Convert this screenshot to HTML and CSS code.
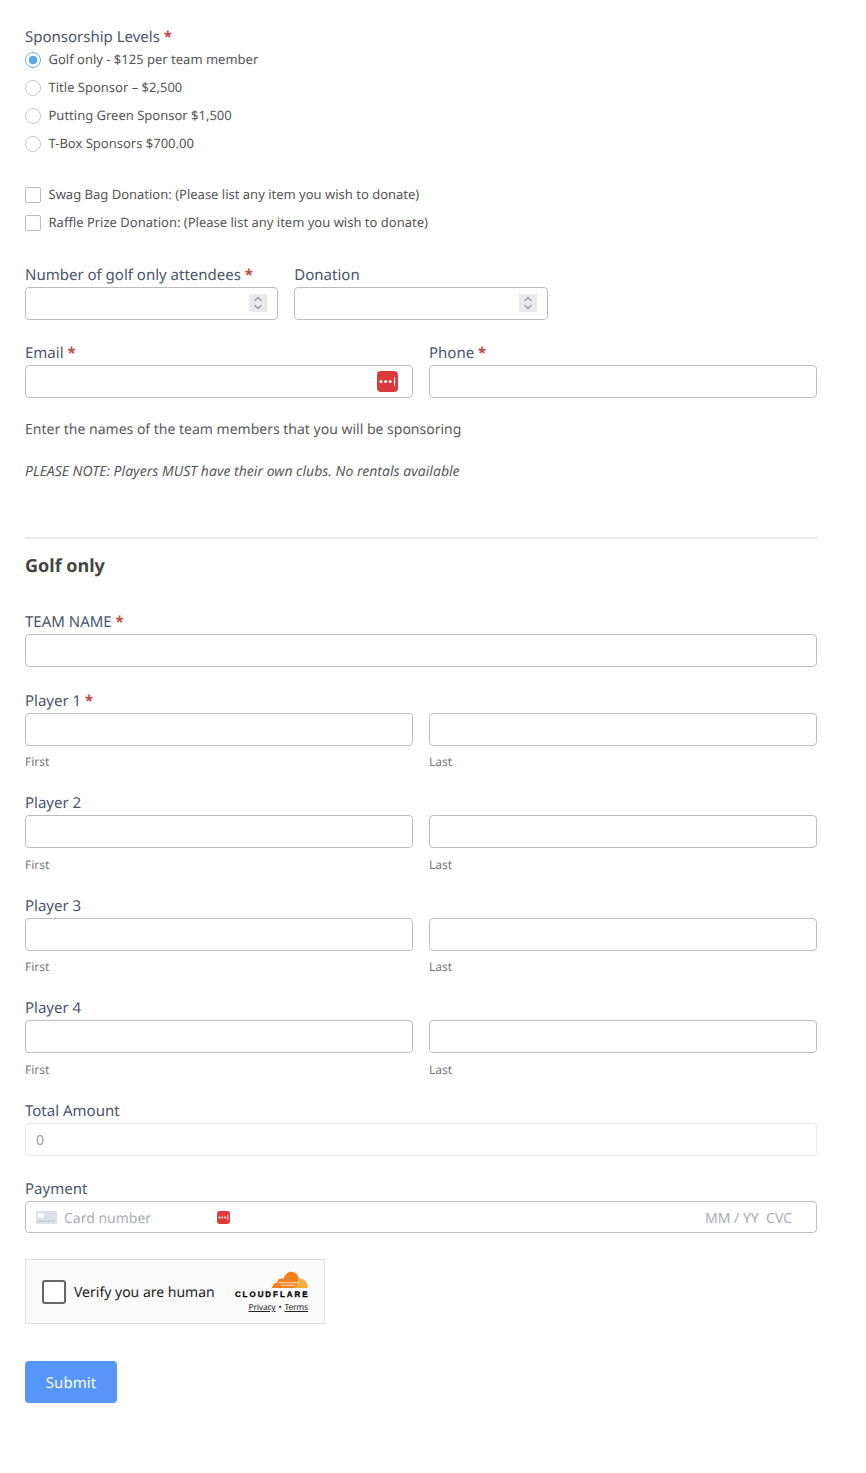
FILE: index.html
```html
<!DOCTYPE html>
<html lang="en">
<head>
<meta charset="utf-8">
<title>Sponsorship form</title>
<link rel="stylesheet" href="styles.css">
</head>
<body>
<form class="form">
  <div class="legend">Sponsorship Levels <span class="req">*</span></div>
  <div class="choices">
    <label class="choice"><span class="radio radio-on"></span>Golf only - $125 per team member</label>
    <label class="choice"><span class="radio"></span>Title Sponsor – $2,500</label>
    <label class="choice"><span class="radio"></span>Putting Green Sponsor $1,500</label>
    <label class="choice"><span class="radio"></span>T-Box Sponsors $700.00</label>
  </div>
  <div class="choices checks">
    <label class="choice"><span class="check"></span>Swag Bag Donation: (Please list any item you wish to donate)</label>
    <label class="choice"><span class="check"></span>Raffle Prize Donation: (Please list any item you wish to donate)</label>
  </div>

  <div class="row row-three">
    <div class="field">
      <div class="label">Number of golf only attendees <span class="req">*</span></div>
      <div class="box-wrap"><input class="box" type="text">
        <span class="stepper"><svg width="10" height="14" viewBox="0 0 10 14"><path d="M1.5 4.8 5 1.5l3.5 3.3M1.5 9.2 5 12.5l3.5-3.3" fill="none" stroke="#8e8e97" stroke-width="1.1"/></svg></span>
      </div>
    </div>
    <div class="field">
      <div class="label">Donation</div>
      <div class="box-wrap"><input class="box" type="text">
        <span class="stepper"><svg width="10" height="14" viewBox="0 0 10 14"><path d="M1.5 4.8 5 1.5l3.5 3.3M1.5 9.2 5 12.5l3.5-3.3" fill="none" stroke="#8e8e97" stroke-width="1.1"/></svg></span>
      </div>
    </div>
  </div>

  <div class="row row-two">
    <div class="field">
      <div class="label">Email <span class="req">*</span></div>
      <div class="box-wrap"><input class="box" type="text">
        <svg class="pass-icon" width="21" height="21" viewBox="0 0 21 21"><rect width="21" height="21" rx="4" fill="#dc3a3a"/><circle cx="4" cy="10.5" r="1.5" fill="#fff"/><circle cx="8.6" cy="10.5" r="1.5" fill="#fff"/><circle cx="13.2" cy="10.5" r="1.5" fill="#fff"/><rect x="17" y="6.2" width="1.1" height="8.6" fill="#fff"/></svg>
      </div>
    </div>
    <div class="field">
      <div class="label">Phone <span class="req">*</span></div>
      <input class="box" type="text">
    </div>
  </div>

  <p class="note">Enter the names of the team members that you will be sponsoring</p>
  <p class="note note-em">PLEASE NOTE: Players MUST have their own clubs. No rentals available</p>

  <hr class="divider">
  <h2 class="section-title">Golf only</h2>

  <div class="field team">
    <div class="label">TEAM NAME <span class="req">*</span></div>
    <input class="box" type="text">
  </div>

  <div class="player">
    <div class="label">Player 1 <span class="req">*</span></div>
    <div class="name-grid">
      <div><input class="box" type="text"><div class="sub">First</div></div>
      <div><input class="box" type="text"><div class="sub">Last</div></div>
    </div>
  </div>
  <div class="player">
    <div class="label">Player 2</div>
    <div class="name-grid">
      <div><input class="box" type="text"><div class="sub">First</div></div>
      <div><input class="box" type="text"><div class="sub">Last</div></div>
    </div>
  </div>
  <div class="player">
    <div class="label">Player 3</div>
    <div class="name-grid">
      <div><input class="box" type="text"><div class="sub">First</div></div>
      <div><input class="box" type="text"><div class="sub">Last</div></div>
    </div>
  </div>
  <div class="player">
    <div class="label">Player 4</div>
    <div class="name-grid">
      <div><input class="box" type="text"><div class="sub">First</div></div>
      <div><input class="box" type="text"><div class="sub">Last</div></div>
    </div>
  </div>

  <div class="field total">
    <div class="label">Total Amount</div>
    <input class="box box-disabled" type="text" value="0" disabled>
  </div>

  <div class="field payment">
    <div class="label">Payment</div>
    <div class="card">
      <svg class="card-icon" width="21" height="13" viewBox="0 0 21 13"><rect width="21" height="13" rx="1" fill="#dde1e9"/><rect x="2" y="2.5" width="6" height="4" fill="#fff"/><path d="M2 10h3.5M6.500 10H10M11 10h3.500M15.500 10H19" stroke="#b4bac6" stroke-width="1"/></svg>
      <span class="card-num">Card number</span>
      <svg class="card-pass" width="13" height="13" viewBox="0 0 21 21"><rect width="21" height="21" rx="4" fill="#dc3a3a"/><circle cx="4" cy="10.500" r="1.600" fill="#fff"/><circle cx="8.600" cy="10.500" r="1.600" fill="#fff"/><circle cx="13.200" cy="10.500" r="1.600" fill="#fff"/><rect x="17" y="6.200" width="1.200" height="8.600" fill="#fff"/></svg>
      <span class="card-end">MM / YY&nbsp; CVC</span>
    </div>
  </div>

  <div class="turnstile">
    <span class="ts-box"></span>
    <span class="ts-text">Verify you are human</span>
    <div class="ts-brand">
      <svg class="ts-cloud" width="36" height="17" viewBox="0 0 36 17"><path d="M0 17c.4-3.300 2.400-5.300 5.200-5.500.3-2.500 2-4 4.300-4 .7 0 1.300.1 1.900.4C13 3.400 15.800.8 19.300.8c3.700 0 6.800 2.800 7.300 6.500L25.300 17z" fill="#f48120"/><path d="M26.800 7.500c3.700-.3 7.600 1.800 8.700 6.300.2 1.200.2 2.200.1 3.200H22.500c.3-2.300 3.500-2.300 4-5z" fill="#faad3f"/><path d="M7 11.700h19.300M9 14.300h14" stroke="#fff" stroke-width=".7"/></svg>
      <div class="ts-word">CLOUDFLARE</div>
      <div class="ts-links"><span class="ts-link">Privacy</span> • <span class="ts-link">Terms</span></div>
    </div>
  </div>

  <button class="submit" type="button">Submit</button>
</form>
</body>
</html>
```
FILE: styles.css
```css
* { box-sizing: border-box; }
html, body { margin: 0; padding: 0; background: #fff; }
body { font-family: "Noto Sans", sans-serif; color: #444; text-rendering: geometricPrecision; }
.form { width: 792px; margin-left: 25px; padding-top: 25px; }
.legend, .label { font-size: 15px; line-height: 24px; height: 22px; color: #4a5568; }
.label { margin-bottom: 2px; }
.legend { height: 21px; }
.req { color: #c24a4a; font-weight: 700; }
.choices { display: flex; flex-direction: column; }
.checks { margin-top: 23px; }
.choice { display: flex; align-items: center; height: 28px; padding-bottom: 2px; font-size: 13px; color: #555; gap: 7.500px; }
.radio { width: 16px; height: 16px; margin-top: 2px; border-radius: 50%; border: 1px solid #c4c6ca; background: #fff; flex: none; }
.radio-on { border-color: #6ab0ee; background: radial-gradient(circle, #5aa6e6 0 4px, #fff 4.600px); }
.check { width: 16px; height: 16px; margin-top: 2px; border-radius: 2px; border: 1px solid #b9bcc4; background: #fff; flex: none; }
.row { display: grid; gap: 16px; }
.row-three { grid-template-columns: repeat(3, 1fr); margin-top: 26px; }
.row-two { grid-template-columns: 1fr 1fr; margin-top: 21px; }
.box-wrap { position: relative; }
.box { display: block; width: 100%; height: 33px; border: 1px solid #bdbdbd; border-radius: 4px; background: #fff; padding: 0 10px; font: 14px "Noto Sans", sans-serif; outline: none; }
.stepper { position: absolute; right: 11px; top: 7px; width: 18px; height: 18px; background: #e9e9ed; display: flex; align-items: center; justify-content: center; }
.pass-icon { position: absolute; right: 15px; top: 6px; }
.note { margin: 21px 0 0; font-size: 14px; line-height: 21px; color: #595959; }
.note-em { font-style: italic; }
.divider { margin: 55px 0 0; border: 0; border-top: 2px solid #e6e6e6; }
.section-title { margin: 15px 0 0; font-size: 18px; line-height: 25px; font-weight: 700; color: #444; }
.team { margin-top: 30.500px; }
.player { margin-top: 22px; height: 80.500px; }
.name-grid { display: grid; grid-template-columns: 1fr 1fr; gap: 16px; }
.sub { font-size: 12px; line-height: 16px; margin-top: 8.500px; color: #777; }
.total { margin-top: 22px; }
.box-disabled { border-color: #e8e8e8; color: #999; background: #fff; }
.payment { margin-top: 21.500px; }
.card { display: flex; align-items: center; height: 32px; border: 1px solid #bdbdc4; border-radius: 4px; padding: 0 24px 0 10px; font-size: 14px; color: #aaadb3; }
.card-icon { flex: none; }
.card-num { margin-left: 7px; width: 153px; padding-top: 2px; white-space: nowrap; }
.card-pass { flex: none; }
.card-end { margin-left: auto; padding-top: 2px; white-space: nowrap; }
.turnstile { display: flex; align-items: center; width: 300px; height: 65px; margin-top: 26px; border: 1px solid #e0e0e0; background: #fafafa; padding: 0 16px; }
.ts-box { width: 24px; height: 24px; border: 2px solid #666; border-radius: 3px; background: #fff; flex: none; }
.ts-text { margin-left: 8px; padding-top: 2px; font-size: 14px; color: #232323; white-space: nowrap; }
.ts-brand { margin-left: auto; padding-top: 3px; display: flex; flex-direction: column; align-items: flex-end; }
.ts-cloud { display: block; margin-top: -2px; }
.ts-word { font-family: "Liberation Sans", sans-serif; font-size: 8px; line-height: 9px; margin-top: 2px; font-weight: 700; letter-spacing: 1.950px; color: #000; margin-right: -1.500px; -webkit-text-stroke: .3px #000; }
.ts-links { font-size: 8.500px; line-height: 11px; margin-top: 3px; color: #232323; letter-spacing: -.2px; word-spacing: 1px; white-space: nowrap; }
.ts-link { text-decoration: underline; }
.submit { display: block; width: 92px; height: 42px; margin-top: 37px; padding: 2px 0 0; border: 0; border-radius: 4px; background: #5596f8; color: #fff; font: 15px "Noto Sans", sans-serif; letter-spacing: .1px; text-rendering: geometricPrecision; }
```
